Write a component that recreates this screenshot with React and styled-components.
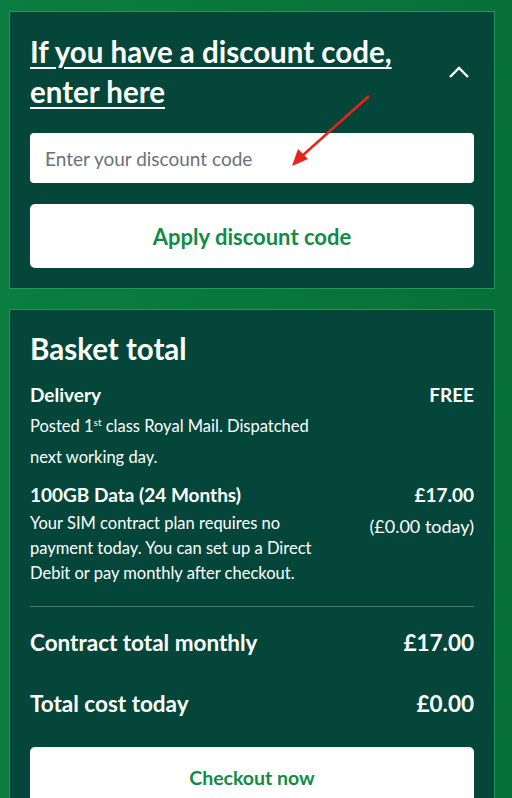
import React from "react";
import styled, { createGlobalStyle } from "styled-components";

const GlobalStyle = createGlobalStyle`
  html, body {
    margin: 0;
    padding: 0;
  }
  body {
    background: linear-gradient(90deg, #0b7d40 0%, #077038 100%);
    font-family: Lato, "Noto Sans", "Liberation Sans", sans-serif;
    color: #fff;
  }
`;

const Page = styled.div`
  height: 798px;
  overflow: hidden;
  padding: 11px 17px 0 9px;
  box-sizing: border-box;
  display: flex;
  flex-direction: column;
  gap: 20px;
`;

const Panel = styled.section`
  position: relative;
  background: #04473a;
  border: 1px solid #1e9a56;
  padding: ${(p) => p.$pad || "20px"};
`;

const HeadRow = styled.div`
  display: flex;
  align-items: center;
  justify-content: space-between;
  margin-bottom: 21px;
`;

const Heading = styled.a`
  font-size: 29.5px;
  font-weight: 700;
  line-height: 40px;
  color: #fff;
  text-decoration: underline;
  text-decoration-thickness: 2px;
  text-underline-offset: 4px;
  max-width: 395px;
`;

const Chevron = styled.button`
  background: none;
  border: 0;
  padding: 0;
  margin-right: 4px;
  display: flex;
  color: #fff;
`;

const Input = styled.input`
  display: block;
  width: 100%;
  box-sizing: border-box;
  height: 50px;
  border: 0;
  border-radius: 4px;
  padding: 0 15px;
  font: inherit;
  font-size: 19px;
  color: #333;
  &::placeholder {
    color: #6b7177;
  }
`;

const Button = styled.button`
  display: block;
  width: 100%;
  height: ${(p) => p.$h || "64px"};
  margin-top: ${(p) => p.$mt || "21px"};
  border: 0;
  border-radius: 5px;
  background: #fff;
  color: #0f8c46;
  font-family: inherit;
  font-size: ${(p) => p.$fs || "22px"};
  font-weight: 700;
  cursor: pointer;
`;

const Title = styled.h2`
  margin: 0 0 15px;
  font-size: 29.5px;
  font-weight: 700;
  line-height: 36px;
`;

const Row = styled.div`
  display: flex;
  justify-content: space-between;
  gap: 16px;
  margin-top: ${(p) => p.$mt || "0"};
`;

const Label = styled.div`
  font-size: 19px;
  font-weight: 700;
  line-height: 26px;
  margin-bottom: 3px;
`;

const Desc = styled.div`
  font-size: 16.5px;
  line-height: ${(p) => p.$lh || "25px"};
  max-width: 300px;

  sup {
    font-size: 10px;
    line-height: 0;
    vertical-align: 6px;
  }
`;

const Amount = styled.div`
  text-align: right;
  font-size: 19px;
  line-height: 26px;
  font-weight: 700;
  white-space: nowrap;
`;

const Today = styled.div`
  font-size: 18px;
  font-weight: 400;
  line-height: 30px;
  margin-top: 3px;
`;

const Divider = styled.hr`
  border: 0;
  border-top: 1px solid #3f7a6a;
  margin: 20px 0 21px;
`;

const TotalRow = styled(Row)`
  font-size: 22.5px;
  font-weight: 700;
  line-height: 30px;
  margin-bottom: ${(p) => p.$mb || "0"};
`;

const Arrow = styled.svg`
  position: absolute;
  left: 270px;
  top: 72px;
  pointer-events: none;
`;

export default function App() {
  return (
    <>
      <GlobalStyle />
      <Page>
        <Panel>
          <HeadRow>
            <Heading href="#">If you have a discount code, enter here</Heading>
            <Chevron aria-label="Collapse">
              <svg width="22" height="14" viewBox="0 0 22 14" fill="none">
                <path d="M2 12L11 3l9 9" stroke="#fff" strokeWidth="2.4" />
              </svg>
            </Chevron>
          </HeadRow>
          <Input placeholder="Enter your discount code" />
          <Button>Apply discount code</Button>
          <Arrow width="100" height="90" viewBox="0 0 100 90">
            <path d="M89 12L22 72" stroke="#e8231c" strokeWidth="2.5" />
            <path d="M12 82l6-17 10 10z" fill="#e8231c" />
          </Arrow>
        </Panel>
        <Panel $pad="21px 20px 0 20px">
          <Title>Basket total</Title>
          <Row>
            <div>
              <Label>Delivery</Label>
              <Desc $lh="31px">
                Posted 1<sup>st</sup> class Royal Mail. Dispatched next working day.
              </Desc>
            </div>
            <Amount>FREE</Amount>
          </Row>
          <Row $mt="9px">
            <div>
              <Label>100GB Data (24 Months)</Label>
              <Desc>
                Your SIM contract plan requires no payment today. You can set up a
                Direct Debit or pay monthly after checkout.
              </Desc>
            </div>
            <Amount>
              £17.00
              <Today>(£0.00 today)</Today>
            </Amount>
          </Row>
          <Divider />
          <TotalRow $mb="31px">
            <span>Contract total monthly</span>
            <span>£17.00</span>
          </TotalRow>
          <TotalRow>
            <span>Total cost today</span>
            <span>£0.00</span>
          </TotalRow>
          <Button $h="60px" $mt="28px" $fs="19.5px">Checkout now</Button>
        </Panel>
      </Page>
    </>
  );
}
